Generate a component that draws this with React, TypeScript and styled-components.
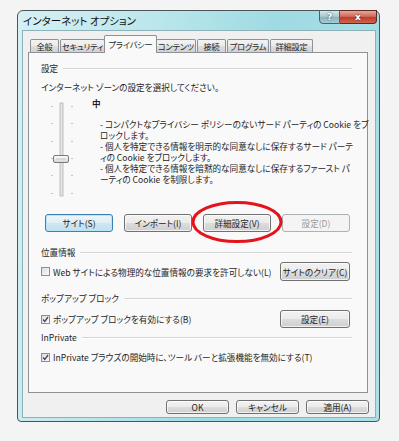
import React from 'react';
import styled, { createGlobalStyle, css } from 'styled-components';

const GlobalStyle = createGlobalStyle`
  html, body {
    margin: 0;
    padding: 0;
    background: #f4f4f4;
  }
  body {
    font-family: "Noto Sans CJK JP", "Noto Sans", sans-serif;
    font-size: 8.6px;
    color: #1e1e1e;
    font-feature-settings: "palt";
  }
`;

const Page = styled.div`
  position: relative;
  width: 399px;
  height: 441px;
  box-sizing: border-box;
  padding: 10px 0 0 17px;
`;

const Window = styled.div`
  width: 363px;
  height: 412px;
  box-sizing: border-box;
  display: flex;
  flex-direction: column;
  border: 1px solid #4b5558;
  border-radius: 6px 6px 4px 4px;
  padding: 0 3px 3px 4px;
  background: linear-gradient(100deg, #d6f0f4 0%, #bde7ed 30%, #9fdbe3 60%, #abe0e7 100%);
`;

const TitleBar = styled.div`
  height: 19px;
  display: flex;
  align-items: flex-start;
  justify-content: space-between;
`;

const Title = styled.div`
  font-size: 10.5px;
  line-height: 20px;
  padding-left: 1px;
  color: #111;
`;

const CaptionButtons = styled.div`
  display: flex;
  margin-top: -1px;
  margin-right: -1px;
`;

const CaptionButton = styled.div<{ $close?: boolean }>`
  height: 14px;
  box-sizing: border-box;
  display: flex;
  align-items: center;
  justify-content: center;
  font-family: "DejaVu Sans", sans-serif;
  font-weight: bold;
  font-size: 9px;
  color: #fff;
  text-shadow: 0 0 2px #333;
  border: 1px solid #4e6166;
  ${(p) =>
    p.$close
      ? css`
          width: 37px;
          border-left: none;
          border-color: #5a2a24;
          border-radius: 0 0 4px 0;
          background: linear-gradient(#e8a89c, #d26a5c 45%, #c23a2c 55%, #d0654f);
        `
      : css`
          width: 21px;
          border-radius: 0 0 0 4px;
          background: linear-gradient(#d6e8ec, #a9c9d0 45%, #8db5be 55%, #a6cdd4);
        `}
`;

const Client = styled.div`
  flex: 1;
  display: flex;
  flex-direction: column;
  background: #f0f0f0;
  border: 1px solid #8eb1b8;
  padding: 4px 7px 0 5px;
`;

const TabStrip = styled.div`
  height: 17px;
  display: flex;
  align-items: flex-end;
  padding-left: 2px;
  position: relative;
  z-index: 1;
`;

const Tab = styled.div<{ $w: number; $active?: boolean }>`
  width: ${(p) => p.$w}px;
  height: 13px;
  box-sizing: border-box;
  margin-right: 1px;
  display: flex;
  align-items: center;
  justify-content: center;
  white-space: nowrap;
  font-size: 8.2px;
  letter-spacing: -0.2px;
  border: 1px solid #8c9298;
  border-bottom: none;
  border-radius: 2px 2px 0 0;
  background: linear-gradient(#f3f3f3, #ebebeb 50%, #dedede 50%, #d2d2d2);
  ${(p) =>
    p.$active &&
    css`
      height: 18px;
      margin: 0 -1px -1px -2px;
      padding-bottom: 2px;
      background: #f9f9f9;
    `}
`;

const Panel = styled.div`
  width: 340px;
  height: 341px;
  box-sizing: border-box;
  border: 1px solid #8c9298;
  background: #f9f9f9;
  padding: 9px 15px 0 12px;
  display: flex;
  flex-direction: column;
`;

const GroupHeader = styled.div<{ $top: number }>`
  margin-top: ${(p) => p.$top}px;
  height: 12px;
  line-height: 12px;
  display: flex;
  align-items: center;
  gap: 5px;
  white-space: nowrap;

  &::after {
    content: '';
    flex: 1;
    height: 1px;
    background: #d2d4d6;
    box-shadow: 0 1px 0 #ffffff;
  }
`;

const Text = styled.div<{ $top?: number }>`
  margin-top: ${(p) => p.$top ?? 0}px;
  line-height: 12px;
  white-space: nowrap;
`;

const SliderArea = styled.div`
  margin-top: 4px;
  height: 111px;
  display: flex;
`;

const SliderSvg = styled.svg`
  margin: 3px 0 0 7px;
  flex: none;
`;

const LevelColumn = styled.div`
  margin-left: 14px;
  display: flex;
  flex-direction: column;
`;

const Level = styled.div`
  font-weight: bold;
  line-height: 12px;
`;

const Description = styled.div`
  margin: 10px 0 0 8px;
  line-height: 11px;
  white-space: nowrap;
`;

const ButtonRow = styled.div`
  margin-top: 6px;
  padding-left: 4px;
  display: flex;
  gap: 11px;
`;

const Button = styled.div<{ $w: number; $h?: number; $variant?: 'default' | 'disabled' }>`
  width: ${(p) => p.$w}px;
  height: ${(p) => p.$h ?? 18}px;
  box-sizing: border-box;
  flex: none;
  display: flex;
  align-items: center;
  justify-content: center;
  white-space: nowrap;
  border: 1px solid #707070;
  border-radius: 3px;
  box-shadow: inset 0 0 0 1px rgba(255, 255, 255, 0.7);
  background: linear-gradient(#f2f2f2, #ebebeb 49%, #dddddd 50%, #cfcfcf);
  ${(p) =>
    p.$variant === 'default' &&
    css`
      border-color: #3c7fb1;
      box-shadow: inset 0 0 0 1px rgba(180, 230, 250, 0.9);
      background: linear-gradient(#edf5fa, #e0eef6 49%, #d0e6f2 50%, #c4dfee);
    `}
  ${(p) =>
    p.$variant === 'disabled' &&
    css`
      border-color: #adb2b5;
      background: #f4f4f4;
      box-shadow: none;
      color: #9a9a9a;
    `}
`;

const CheckRow = styled.div<{ $top: number; $h: number }>`
  margin-top: ${(p) => p.$top}px;
  height: ${(p) => p.$h}px;
  display: flex;
  align-items: center;
  justify-content: space-between;
  padding-right: 2px;
`;

const CheckLabel = styled.label`
  display: flex;
  align-items: center;
  gap: 3px;
  white-space: nowrap;
`;

const Box = styled.span`
  width: 9px;
  height: 9px;
  box-sizing: border-box;
  border: 1px solid #8e8f8f;
  background: linear-gradient(135deg, #dcdcdc, #fbfbfb);
  display: flex;
  align-items: center;
  justify-content: center;
`;

const Footer = styled.div`
  margin: 7px -1px 0 0;
  display: flex;
  justify-content: flex-end;
  gap: 7px;
`;

const Mark = styled.svg`
  position: absolute;
  left: 190px;
  top: 199px;
  pointer-events: none;
`;

const tabs = [
  { label: '全般', w: 29 },
  { label: 'セキュリティ', w: 45 },
  { label: 'プライバシー', w: 53, active: true },
  { label: 'コンテンツ', w: 40 },
  { label: '接続', w: 29 },
  { label: 'プログラム', w: 42 },
  { label: '詳細設定', w: 43 },
];

const description = [
  '- コンパクトなプライバシー ポリシーのないサード パーティの Cookie をブ',
  'ロックします。',
  '- 個人を特定できる情報を明示的な同意なしに保存するサード パーテ',
  'ィの Cookie をブロックします。',
  '- 個人を特定できる情報を暗黙的な同意なしに保存するファースト パ',
  'ーティの Cookie を制限します。',
];

const tickYs = [6, 23, 41, 58, 75, 93];

const Slider = () => (
  <SliderSvg width="30" height="100" viewBox="0 0 30 100">
    {tickYs.map((y) => (
      <g key={y} fill="#c4c4c4">
        <rect x="3" y={y} width="2" height="1" />
        <rect x="23" y={y} width="2" height="1" />
      </g>
    ))}
    <rect x="12" y="3" width="3" height="93" fill="#e4e4e4" stroke="#b4b4b4" strokeWidth="0.8" />
    <defs>
      <linearGradient id="thumb" x1="0" y1="0" x2="0" y2="1">
        <stop offset="0" stopColor="#fdfdfd" />
        <stop offset="1" stopColor="#d6d6d6" />
      </linearGradient>
    </defs>
    <rect x="5.5" y="55.5" width="15" height="7" rx="1.5" fill="url(#thumb)" stroke="#7a7a7a" />
    <line x1="8" y1="59" x2="18" y2="59" stroke="#c8c8c8" />
  </SliderSvg>
);

const CheckBox = ({ checked }: { checked?: boolean }) => (
  <Box>
    {checked && (
      <svg width="7" height="7" viewBox="0 0 7 7">
        <path d="M1 3.5 L2.8 5.5 L6 1" fill="none" stroke="#3a4a6a" strokeWidth="1.3" />
      </svg>
    )}
  </Box>
);

const App = () => {
  return (
    <Page>
      <GlobalStyle />
      <Window>
        <TitleBar>
          <Title>インターネット オプション</Title>
          <CaptionButtons>
            <CaptionButton>?</CaptionButton>
            <CaptionButton $close>x</CaptionButton>
          </CaptionButtons>
        </TitleBar>
        <Client>
          <TabStrip>
            {tabs.map((t) => (
              <Tab key={t.label} $w={t.w} $active={t.active}>
                {t.label}
              </Tab>
            ))}
          </TabStrip>
          <Panel>
            <GroupHeader $top={0}>設定</GroupHeader>
            <Text $top={7}>インターネット ゾーンの設定を選択してください。</Text>
            <SliderArea>
              <Slider />
              <LevelColumn>
                <Level>中</Level>
                <Description>
                  {description.map((line) => (
                    <div key={line}>{line}</div>
                  ))}
                </Description>
              </LevelColumn>
            </SliderArea>
            <ButtonRow>
              <Button $w={68} $variant="default">サイト(S)</Button>
              <Button $w={68}>インポート(I)</Button>
              <Button $w={68}>詳細設定(V)</Button>
              <Button $w={68} $variant="disabled">設定(D)</Button>
            </ButtonRow>

            <GroupHeader $top={14}>位置情報</GroupHeader>
            <CheckRow $top={4} $h={19}>
              <CheckLabel>
                <CheckBox />
                Web サイトによる物理的な位置情報の要求を許可しない(L)
              </CheckLabel>
              <Button $w={70} $h={19}>サイトのクリア(C)</Button>
            </CheckRow>

            <GroupHeader $top={11}>ポップアップ ブロック</GroupHeader>
            <CheckRow $top={6} $h={18}>
              <CheckLabel>
                <CheckBox checked />
                ポップアップ ブロックを有効にする(B)
              </CheckLabel>
              <Button $w={70}>設定(E)</Button>
            </CheckRow>

            <GroupHeader $top={3}>InPrivate</GroupHeader>
            <CheckRow $top={8} $h={12}>
              <CheckLabel>
                <CheckBox checked />
                InPrivate ブラウズの開始時に、ツール バーと拡張機能を無効にする(T)
              </CheckLabel>
            </CheckRow>
          </Panel>
          <Footer>
            <Button $w={63} $h={14}>OK</Button>
            <Button $w={63} $h={14}>キャンセル</Button>
            <Button $w={63} $h={14}>適用(A)</Button>
          </Footer>
        </Client>
      </Window>
      <Mark width="94" height="46" viewBox="0 0 94 46">
        <ellipse cx="47" cy="23" rx="44" ry="19.5" fill="none" stroke="#e3151b" strokeWidth="3" />
      </Mark>
    </Page>
  );
};

export default App;
